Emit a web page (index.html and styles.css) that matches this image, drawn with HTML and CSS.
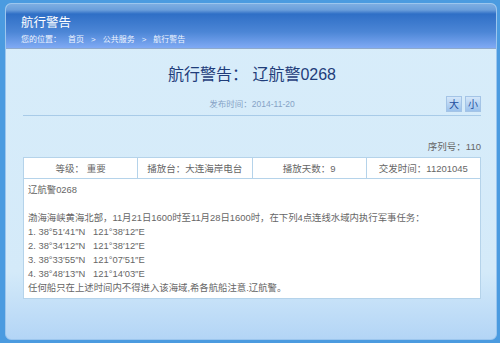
FILE: index.html
```html
<!DOCTYPE html>
<html lang="zh-CN">

<head>
    <meta charset="UTF-8">
    <meta name="viewport" content="width=device-width, initial-scale=1.0">
    <title>航行警告</title>
    <link rel="stylesheet" href="styles.css">
</head>

<body>
    <div class="panel">
        <div class="panel-head">
            <h1 class="panel-title">航行警告</h1>
            <div class="crumbs">
                <span>您的位置：</span><a href="#">首页</a><span class="sep">&gt;</span><a href="#">公共服务</a><span class="sep">&gt;</span><a href="#">航行警告</a>
            </div>
        </div>
        <div class="panel-body">
            <h2 class="notice-title">航行警告： 辽航警0268</h2>
            <div class="meta">
                <span></span>
                <span class="date">发布时间：2014-11-20</span>
                <span class="sizes"><button class="size-btn">大</button><button class="size-btn">小</button></span>
            </div>
            <div class="serial">序列号：110</div>
            <table class="notice">
                <tr class="info">
                    <td>等级： 重要</td>
                    <td>播放台：大连海岸电台</td>
                    <td>播放天数：9</td>
                    <td>交发时间：11201045</td>
                </tr>
                <tr>
                    <td colspan="4" class="content">
                        辽航警0268<br><br>
                        渤海海峡黄海北部，11月21日1600时至11月28日1600时，在下列4点连线水域内执行军事任务：<br>
                        1. 38°51′41″N&nbsp;&nbsp;&nbsp;121°38′12″E<br>
                        2. 38°34′12″N&nbsp;&nbsp;&nbsp;121°38′12″E<br>
                        3. 38°33′55″N&nbsp;&nbsp;&nbsp;121°07′51″E<br>
                        4. 38°48′13″N&nbsp;&nbsp;&nbsp;121°14′03″E<br>
                        任何船只在上述时间内不得进入该海域,希各航船注意.辽航警。
                    </td>
                </tr>
            </table>
        </div>
    </div>
</body>

</html>
```

FILE: styles.css
```css
body {
    margin: 0;
    height: 343px;
    background: #4b9be0;
    font-family: "Liberation Sans", "Noto Sans CJK SC", sans-serif;
    padding: 3px 3px 5px 5px;
    box-sizing: border-box;
}

.panel {
    height: 335px;
    border: 1px solid #9cc6ee;
    border-radius: 6px;
    overflow: hidden;
    display: flex;
    flex-direction: column;
    background: linear-gradient(to bottom, #d8edfa 0%, #d4eaf9 80%, #b3d5f6 100%);
}

.panel-head {
    height: 45px;
    box-sizing: border-box;
    padding: 11px 0 0 15px;
    color: #fff;
    background: linear-gradient(to bottom, #7eaee2 0px, #6a9edb 6px, #2f6fc6 10px, #4c86d6 28px, #80aaf4 44px);
    border-bottom: 1px solid #8ea9cc;
}

.panel-title {
    margin: 0;
    font-size: 12.5px;
    font-weight: normal;
    line-height: 16px;
}

.crumbs {
    margin-top: 3px;
    font-size: 8px;
    line-height: 12px;
    color: #eef4ff;
}

.crumbs a {
    color: #eef4ff;
    text-decoration: none;
    margin-left: 7px;
}

.crumbs .sep {
    margin-left: 7px;
}

.panel-body {
    flex: 1;
    padding: 15px 15px 0 17px;
}

.notice-title {
    margin: 0;
    text-align: center;
    font-size: 16px;
    font-weight: normal;
    line-height: 22px;
    color: #1f3d7a;
}

.meta {
    display: grid;
    grid-template-columns: 1fr auto 1fr;
    align-items: center;
    margin-top: 10px;
    padding-bottom: 3px;
    border-bottom: 1px solid #a8cbe8;
}

.date {
    font-size: 8.5px;
    color: #86a3c6;
    line-height: 16px;
}

.sizes {
    justify-self: end;
    display: flex;
    gap: 3px;
}

.size-btn {
    width: 16px;
    height: 16px;
    padding: 0;
    border: 1px solid #a4c4e6;
    background: linear-gradient(to bottom, #d4e7fa, #9cc2ec);
    color: #1f4d9e;
    font-size: 10px;
    line-height: 14px;
    font-family: "Noto Sans CJK SC", sans-serif;
}

.serial {
    text-align right;
    text-align: right;
    font-size: 9.5px;
    line-height: 14px;
    margin-top: 24px;
    color: #666;
}

.notice {
    width: 100%;
    margin-top: 3px;
    border-collapse: collapse;
    background: #fff;
    table-layout: fixed;
    font-size: 9.5px;
    color: #666;
}

.notice td {
    border: 1px solid #b5d3ea;
    padding: 0;
}

.notice .info td {
    height: 20px;
    text-align: center;
}

.notice .content {
    padding: 4px 4px 3px;
    font-size: 9.4px;
    line-height: 14px;
    text-align: left;
}
```
